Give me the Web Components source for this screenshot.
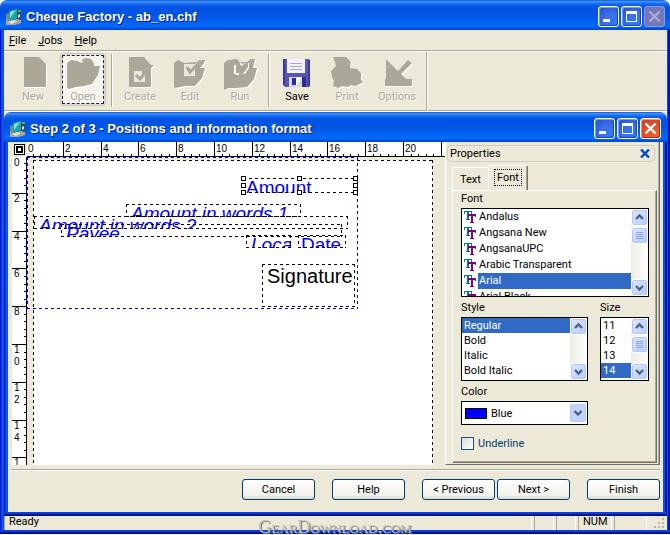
<!DOCTYPE html>
<html lang="en">
<head>
<meta charset="utf-8">
<title>Cheque Factory - ab_en.chf</title>
<style>
  :root {
    --face: #ece9d8;
    --shade: #aca899;
    --dark: #716f64;
    --select: #316ac5;
    --ink: #003c74;
  }
  html, body { height: 100%; }
  body {
    margin: 0;
    background: #f4f4f0;
    font: 11px Roboto, "Liberation Sans", Arial, sans-serif;
    color: #000;
    overflow: hidden;
  }
  .app { height: calc(100vh - 1px); }
  .desk { flex: 1; min-height: 0; }
  .work { flex: 1; min-height: 0; display: flex; padding: 0 3px 0 4px; }
  cheque-editor { flex: 1; min-width: 0; }
  .row { display: flex; gap: 12px; }
  .row > :first-child { flex: 1; }
  .short { margin-right: 61px; }
  .narrow { width: 49px; }
  .tick { margin-top: 8px; }
</style>
</head>
<body>

<xp-window class="app" caption="Cheque Factory - ab_en.chf" locked>
  <menu-bar items="File|Jobs|Help"></menu-bar>
  <tool-bar>
    <tool-button icon="new" disabled>New</tool-button>
    <tool-button icon="open" disabled active>Open</tool-button>
    <tool-separator></tool-separator>
    <tool-button icon="create" disabled>Create</tool-button>
    <tool-button icon="edit" disabled>Edit</tool-button>
    <tool-button icon="run" disabled>Run</tool-button>
    <tool-separator></tool-separator>
    <tool-button icon="save">Save</tool-button>
    <tool-button icon="print" disabled>Print</tool-button>
    <tool-button icon="options" disabled>Options</tool-button>
  </tool-bar>

  <xp-window class="desk" caption="Step 2 of 3 - Positions and information format" child>
    <div class="work">
      <cheque-editor>
        <cheque-field box="99 47 175 13" italic>Amount in words 1</cheque-field>
        <cheque-field box="7 59 314 13" italic>Amount in words 2</cheque-field>
        <cheque-field box="34 67 281 13" italic>Payee</cheque-field>
        <cheque-field box="219 78 45 13" italic>Local</cheque-field>
        <cheque-field box="271 78 48 13">Date</cheque-field>
        <cheque-field box="235 107 93 43" large>Signature</cheque-field>
        <cheque-field box="216 21 113 15" selected>Amount</cheque-field>
      </cheque-editor>
      <property-panel caption="Properties">
        <list-box label="Font" items="Andalus|Angsana New|AngsanaUPC|Arabic Transparent|Arial|Arial Black" value="Arial" thumb icons></list-box>
        <div class="row">
          <list-box label="Style" items="Regular|Bold|Italic|Bold Italic" value="Regular"></list-box>
          <list-box class="narrow" label="Size" items="11|12|13|14" value="14" thumb></list-box>
        </div>
        <color-box class="short" label="Color" value="Blue" color="#0000ff"></color-box>
        <check-box class="tick">Underline</check-box>
      </property-panel>
    </div>
    <wizard-footer>
      <push-button>Cancel</push-button>
      <push-button>Help</push-button>
      <push-button>&lt; Previous</push-button>
      <push-button joined>Next &gt;</push-button>
      <push-button>Finish</push-button>
    </wizard-footer>
  </xp-window>

  <status-bar>Ready</status-bar>
</xp-window>
<water-mark>GearDownload.com</water-mark>

<script>
// Dashed 1px outline, three on and three off
const dashed = (color) => `
  background:
    repeating-linear-gradient(90deg, ${color} 0 3px, transparent 3px 6px) top / 100% 1px no-repeat,
    repeating-linear-gradient(90deg, ${color} 0 3px, transparent 3px 6px) bottom / 100% 1px no-repeat,
    repeating-linear-gradient(${color} 0 3px, transparent 3px 6px) left / 1px 100% no-repeat,
    repeating-linear-gradient(${color} 0 3px, transparent 3px 6px) right / 1px 100% no-repeat;`;

class BaseElement extends HTMLElement {
  constructor() {
    super();
    this.attachShadow({ mode: 'open' });
  }

  connectedCallback() {
    this.shadowRoot.innerHTML = this.template();
  }

  attr(name) {
    return this.getAttribute(name) || '';
  }
}

// Window with title bar and blue frame
class XpWindow extends BaseElement {
  template() {
    const child = this.hasAttribute('child');
    const locked = this.hasAttribute('locked') ? 'disabled' : '';
    return `
      <style>
        :host {
          display: flex;
          flex-direction: column;
          box-sizing: border-box;
          min-width: 0;
          overflow: hidden;
          border-radius: 7px 7px 0 0;
        }
        header {
          flex: none;
          display: flex;
          align-items: center;
          gap: 2px;
          box-sizing: border-box;
          height: 30px;
          padding: 3px ${child ? '6px' : '5px'} 0 6px;
          background: linear-gradient(#0a4fd6 0, #3f93fb 5%, #2478f5 10%, #0a5be8 18%, #0053e1 30%, #0056e6 55%, #0466f8 78%, #0367fb 88%, #0055e0 95%, #003ecb 100%);
        }
        h1 {
          flex: 1;
          margin: 0;
          padding-left: 2px;
          font: bold 13px/20px "Liberation Sans", Arial, sans-serif;
          color: #fff;
          text-shadow: 1px 1px #0a1883;
          white-space: nowrap;
        }
        .ctl {
          flex: none;
          width: 21px;
          height: 21px;
          padding: 0;
          border: 1px solid #fff;
          border-radius: 3px;
          background: radial-gradient(circle at 80% 85%, #2f7bf5, #3a6fe8 45%, #1f4fd0 100%);
          box-shadow: inset 1px 1px #6f9bf3, inset -1px -1px #1941b5;
        }
        .ctl svg { display: block; }
        .close { background: radial-gradient(circle at 80% 80%, #e8632f, #e2502a 50%, #c8381c); box-shadow: inset 1px 1px #f0947a, inset -1px -1px #a52a10; }
        .close:disabled { background: #7376b8; border-color: #8f9bd8; box-shadow: none; }
        .frame {
          flex: 1;
          min-height: 0;
          display: flex;
          flex-direction: column;
          box-sizing: border-box;
          padding: 0 ${child ? '4px' : '3px'} 4px 4px;
          background:
            linear-gradient(#0a3fe0 0 50%, #00138c 50%) bottom / 100% 4px no-repeat,
            linear-gradient(90deg, #0019cf 0 1px, #0a3fe0 1px 2px, #1358ee 2px 3px, #0a4fe2 3px) left / 4px 100% no-repeat,
            linear-gradient(90deg, #0a4fe2 0 2px, #0019b0 2px) right / 4px 100% no-repeat;
        }
        .client {
          flex: 1;
          min-height: 0;
          display: flex;
          flex-direction: column;
          background: var(--face);
        }
      </style>
      <header>
        <svg width="16" height="16" viewBox="0 0 16 16">
          <path d="M0 5l4-1v10l-4 1z" fill="#7d8790"/>
          <path d="M3 2l8-2 1 9-9 3z" fill="#19a9a0"/>
          <path d="M4 3l6-2-6 8z" fill="#7fe6da"/>
          <path d="M11 3l4-2v11l-4 2z" fill="#37474f"/>
          <path d="M12 6l2-1v3l-2 1z" fill="#d8e0e0"/>
          <path d="M0 11l4 1 7-2 4 1v3l-6 2H0z" fill="#a9a49c"/>
          <path d="M2 13l5-2 4 1-5 3z" fill="#e6e2da"/>
          <path d="M12 1h3v2h-3z" fill="#54b34d"/>
        </svg>
        <h1>${this.attr('caption')}</h1>
        <button class="ctl" aria-label="Minimize"><svg width="19" height="19"><path d="M4 12h7v3H4z" fill="#fff"/></svg></button>
        <button class="ctl" aria-label="Maximize"><svg width="19" height="19"><path d="M4 4h11v11H4zM5 7v7h9V7z" fill="#fff" fill-rule="evenodd"/></svg></button>
        <button class="ctl close" aria-label="Close" ${locked}><svg width="19" height="19"><path d="M4.500 4.500l10 10M14.500 4.500l-10 10" stroke="${locked ? '#a9acd6' : '#fff'}" stroke-width="2.400"/></svg></button>
      </header>
      <div class="frame"><div class="client"><slot></slot></div></div>
    `;
  }
}

class MenuBar extends BaseElement {
  template() {
    const items = this.attr('items').split('|');
    return `
      <style>
        :host { display: block; border-bottom: 1px solid var(--shade); }
        nav { display: flex; gap: 12px; height: 20px; padding-left: 5px; }
        button { padding: 0; border: 0; background: none; font: inherit; line-height: 19px; color: inherit; }
      </style>
      <nav>${items.map((t) => `<button><u>${t[0]}</u>${t.slice(1)}</button>`).join('')}</nav>
    `;
  }
}

class ToolBar extends BaseElement {
  template() {
    return `
      <style>
        :host {
          display: flex;
          height: 59px;
          border-top: 1px solid #fff;
          border-bottom: 1px solid #fff;
          box-shadow: inset 0 -1px var(--shade);
        }
        .band { display: flex; padding: 1px 4px 3px; border-right: 1px solid var(--shade); box-shadow: 1px 0 #fff; }
      </style>
      <div class="band"><slot></slot></div>
    `;
  }
}

class ToolSeparator extends BaseElement {
  template() {
    return `
      <style>
        :host { display: block; box-sizing: border-box; width: 7px; padding: 1px 2px 0; }
        i { display: block; width: 1px; height: 53px; margin-left: 1px; background: var(--shade); box-shadow: 1px 0 #fff; }
      </style>
      <i></i>
    `;
  }
}

const toolIcons = {
  new: '<path d="M8 1h15l7 7v23H8z"/>',
  open: '<path d="M1 7l4-3 6 1 5 2 1-2-2-1 5-2 5 1 3 4v3h6l-2 9-6 9-8 2-8 1-7 2-2-1z"/>',
  create: '<path d="M6 1h15l7 8h3l-3 3v19H6z"/><path d="M11 15h8v3h3v8H11z" fill="var(--face)"/><path d="M13 19l4 4 7-9" fill="none" stroke="var(--shade)" stroke-width="3"/>',
  edit: '<path d="M1 7l4-3 6 3 12-1 4-2h5l-1 3-4 5h5l-3 10-7 8H12L2 32 1 30z"/><path d="M11 8h11l5-4 2 1-7 8v7H11z" fill="var(--face)"/><path d="M14 11l3 5 11-11" fill="none" stroke="var(--shade)" stroke-width="3"/>',
  run: '<path d="M1 7l4-3 9-1 3 3 7 0 4-3h4l-2 9h4l-3 11-7 8-11 1-7 0-5 2z"/><path d="M11 9h2v9h-2zM16 5l3 3 4-1-5 3zM20 18l5-7 0-4 1 0v5l-4 6zM13 17h3v2h-3z" fill="#fff"/>',
  save: `
    <path d="M3 3h26l1 1v26l-1 1H5l-2-2z" fill="#5a55b5"/>
    <path d="M3 3h2v26l-2-1zM28 4h2v26h-2z" fill="#3d3a94"/>
    <path d="M7 3h18v14H7z" fill="#f1f1f8"/>
    <path d="M10 7h12v1H10zM10 10h12v1H10zM10 13h12v1H10z" fill="#aaaabc"/>
    <path d="M9 21h17v10H9z" fill="#d6d6e2"/>
    <path d="M12 22h4v7h-4z" fill="#2b2aa0"/>
    <path d="M16 31l6-10h-5l-1 3z" fill="#fff"/>
    <path d="M22 21h4v10h-4z" fill="#2f2d92"/>`,
  print: '<path d="M3 1h13l5 5-1 6 7 1 4 4v7l2 2-1 1-7 3-4-1-3 2-5-1-5 2-5-2 1-5-2-4-1-6 5-5-1-4z"/>',
  options: '<path d="M6 3l12 12L28 4l4 3-11 11 5 5h6v7H5v-7h1z"/>'
};

class ToolButton extends BaseElement {
  template() {
    const off = this.hasAttribute('disabled');
    return `
      <style>
        :host { display: block; width: 50px; padding: 0 2px; box-sizing: border-box; }
        button {
          display: flex;
          flex-direction: column;
          align-items: center;
          box-sizing: border-box;
          width: 100%;
          height: 53px;
          padding: 2px 0 0;
          border: 1px solid transparent;
          border-radius: 3px;
          background: none;
          font: inherit;
          line-height: 14px;
          color: #000;
        }
        button:disabled { color: var(--shade); text-shadow: 1px 1px #fff; }
        button:disabled svg { fill: var(--shade); filter: drop-shadow(1px 1px 0 #fff); }
        svg { display: block; flex: none; }
        :host([active]) button {
          border-color: #cbc8b8;
          background: #f5f4ec;
          outline: 1px dashed #1b1b4a;
          outline-offset: -3px;
          box-shadow: inset 0 0 0 1px #dedbcd;
        }
      </style>
      <button ${off ? 'disabled' : ''}>
        <svg width="34" height="34" viewBox="0 0 34 34">${toolIcons[this.attr('icon')]}</svg>
        <slot></slot>
      </button>
    `;
  }
}

// Ruler: a numbered mark every 2 cm, a small tick every 0.4 cm
class RulerScale extends BaseElement {
  connectedCallback() {
    super.connectedCallback();
    this.observer = new ResizeObserver(() => this.draw());
    this.observer.observe(this);
  }

  disconnectedCallback() {
    this.observer.disconnect();
  }

  draw() {
    const vertical = this.hasAttribute('vertical');
    const length = vertical ? this.clientHeight : this.clientWidth;
    let marks = '';
    for (let n = 0, p = -2; p < length; n++, p = Math.round(n * 7.56 - 2)) {
      const major = n % 5 === 0;
      const from = major ? 0 : 12;
      if (n) {
        marks += vertical
          ? `<path d="M${from} ${p}h${15 - from}v1H${from}z"/>`
          : `<path d="M${p} ${from}v15h1V${from}z"/>`;
      }
      if (!major) continue;
      const label = String(n / 5 * 2);
      if (vertical) {
        [...label].forEach((digit, i) => {
          const y = Math.max(p, 0) + 9 + i * 12;
          if (y < length + 6) marks += `<text x="2" y="${y}">${digit}</text>`;
        });
      } else if (p + 8 < length) {
        marks += `<text x="${Math.max(p, -1) + 2}" y="10">${label}</text>`;
      }
    }
    this.shadowRoot.querySelector('svg').innerHTML = marks;
  }

  template() {
    return `
      <style>
        :host { display: block; overflow: hidden; position: relative; min-width: 0; min-height: 0; background: #fff; box-shadow: inset 0 -1px #000; }
        :host([vertical]) { box-shadow: inset -1px 0 #000; }
        svg { position: absolute; inset: 0; }
        text { font: 10px "Liberation Sans", Arial, sans-serif; }
      </style>
      <svg width="100%" height="100%" shape-rendering="crispEdges"></svg>
    `;
  }
}

class ChequeEditor extends BaseElement {
  template() {
    return `
      <style>
        :host {
          display: grid;
          grid-template: 15px minmax(0, 1fr) / 15px minmax(0, 1fr);
        }
        .corner { display: block; background: var(--face); }
        .stage { position: relative; overflow: hidden; margin-right: 1px; }
        .paper { position: absolute; left: 6px; top: 3px; bottom: -3px; width: 400px; background-color: #fff; }
        .paper::after, .area { content: ""; position: absolute; inset: 0; ${dashed('#000')} }
        .area { inset: auto; left: 0; top: 0; width: 331px; height: 152px; ${dashed('#0000d8')} }
      </style>
      <svg class="corner" width="15" height="15" shape-rendering="crispEdges">
        <path d="M2 2h10v10H2z" fill="#fff" stroke="#000"/><path d="M4 4h7v7H4zM6 6v3h3V6z" fill-rule="evenodd"/>
      </svg>
      <ruler-scale></ruler-scale>
      <ruler-scale vertical></ruler-scale>
      <div class="stage">
        <div class="paper"></div>
        <div class="area"></div>
        <slot></slot>
      </div>
    `;
  }
}

// One printable field, placed on the cheque by its box attribute: x y width height
class ChequeField extends BaseElement {
  template() {
    const [x, y, w, h] = this.attr('box').split(' ').map(Number);
    let handles = '';
    if (this.hasAttribute('selected')) {
      for (const hx of [0, (w - 1) / 2, w - 1]) {
        for (const hy of [0, (h - 1) / 2, h - 1]) {
          if (hx === (w - 1) / 2 && hy === (h - 1) / 2) continue;
          handles += `<rect x="${hx + 0.5}" y="${hy + 0.5}" width="4" height="4"/>`;
        }
      }
    }
    return `
      <style>
        :host {
          position: absolute;
          left: ${x}px;
          top: ${y}px;
          width: ${w}px;
          height: ${h}px;
          color: #0000ff;
          font: 19px/20px "Liberation Sans", Arial, sans-serif;
        }
        :host([italic]) { font-style: italic; }
        :host([large]) { color: #000; font-size: 20px; line-height: 24px; }
        .text { box-sizing: border-box; width: 100%; height: 100%; padding-left: 3px; overflow: hidden; white-space: nowrap; }
        :host([italic]) .text, :host([large]) .text { padding-left: 5px; }
        .edge { position: absolute; inset: 0; ${dashed('#000')} }
        svg { position: absolute; left: -2px; top: -2px; overflow: visible; fill: #fff; stroke: #000; }
      </style>
      <div class="text"><slot></slot></div>
      <div class="edge"></div>
      ${handles ? `<svg width="${w + 4}" height="${h + 4}">${handles}</svg>` : ''}
    `;
  }
}

class PropertyPanel extends BaseElement {
  template() {
    return `
      <style>
        :host {
          display: flex;
          flex-direction: column;
          box-sizing: border-box;
          width: 215px;
          padding: 3px 2px 0 1px;
          border-left: 1px solid #fff;
          border-right: 1px solid var(--dark);
          border-bottom: 1px solid var(--dark);
          box-shadow: inset -1px 0 var(--shade);
        }
        header {
          display: flex;
          justify-content: space-between;
          align-items: center;
          box-sizing: border-box;
          height: 17px;
          margin-right: 2px;
          padding: 0 4px 0 2px;
          border: 1px solid #d0cdbc;
          border-radius: 4px;
        }
        header button { width: 10px; height: 9px; padding: 0; border: 0; background: none; }
        svg { display: block; }
        .tabs { display: flex; align-items: flex-end; margin: 3px 0 0 5px; }
        .tabs button {
          height: 23px;
          padding: 0 7px;
          border: 0 solid #fff;
          border-width: 1px 0 0 1px;
          border-radius: 2px 2px 0 0;
          background: var(--face);
          font: inherit;
          color: inherit;
        }
        .tabs .on { height: 26px; margin-bottom: -1px; padding: 0 5px; border-right: 1px solid var(--dark); box-shadow: inset -1px 0 var(--shade); }
        .on span { display: block; padding: 2px 3px; margin-bottom: 2px; outline: 1px dotted #000; outline-offset: -1px; }
        .page {
          flex: 1;
          display: flex;
          flex-direction: column;
          gap: 4px;
          margin: 0 0 1px 5px;
          padding: 1px 7px 0 8px;
          border: 1px solid #fff;
          border-right-color: var(--dark);
          border-bottom-color: var(--dark);
          box-shadow: inset -1px -1px var(--shade);
        }
      </style>
      <header>
        <span>${this.attr('caption')}</span>
        <button aria-label="Close"><svg width="10" height="9"><path d="M1 .5l8 8M9 .5l-8 8" stroke="#0046d5" stroke-width="2.400"/></svg></button>
      </header>
      <div class="tabs" role="tablist">
        <button role="tab">Text</button><button class="on" role="tab" aria-selected="true"><span>Font</span></button>
      </div>
      <div class="page"><slot></slot></div>
    `;
  }
}

class ScrollBar extends BaseElement {
  template() {
    const arrow = (d) => `<svg width="15" height="15"><path d="${d}" fill="none" stroke="#4d6185" stroke-width="2.400"/></svg>`;
    return `
      <style>
        :host { display: flex; flex-direction: column; width: 17px; background: linear-gradient(90deg, #eeede5, #fefefb); }
        button {
          flex: none;
          box-sizing: border-box;
          width: 17px;
          height: 17px;
          padding: 0;
          border: 1px solid #fff;
          border-radius: 3px;
          background: linear-gradient(135deg, #dbe6fe, #b9cbfa);
          box-shadow: inset 0 0 0 1px #b4c8f6;
        }
        svg { display: block; }
        .thumb { margin-top: 1px; }
        .down { margin-top: auto; }
      </style>
      <button aria-label="Up">${arrow('M4 9l3.500-3.500L11 9')}</button>
      ${this.hasAttribute('thumb') ? '<button class="thumb" aria-label="Position"><svg width="15" height="15"><path d="M4 4.500h7M4 6.500h7M4 8.500h7M4 10.500h7" stroke="#8ba6e6"/></svg></button>' : ''}
      <button class="down" aria-label="Down">${arrow('M4 6l3.500 3.500L11 6')}</button>
    `;
  }
}

const fontIcon = 'data:image/svg+xml,' + encodeURIComponent(
  '<svg xmlns="http://www.w3.org/2000/svg" width="13" height="14" shape-rendering="crispEdges">' +
  '<path d="M0 1h8v3H7V2H5v7h1v1H2V9h1V2H1v2H0z" fill="#008080"/>' +
  '<path d="M4 4h8v3h-1V6H9v6h1v1H6v-1h1V6H5v1H4z" fill="#800080"/></svg>');

class ListBox extends BaseElement {
  template() {
    const value = this.attr('value');
    const options = this.attr('items').split('|')
      .map((t) => `<option ${t === value ? 'selected' : ''}>${t}</option>`).join('');
    return `
      <style>
        :host { display: block; }
        label { display: block; height: 14px; margin-bottom: 2px; line-height: 14px; }
        .box { display: flex; box-sizing: border-box; height: 64px; border: 1px solid #000; background: #fff; }
        select {
          flex: 1;
          min-width: 0;
          height: 100%;
          padding: 0;
          border: 0;
          border-radius: 0;
          outline: 0;
          background: #fff;
          font: inherit;
          color: #000;
          overflow: hidden;
          scrollbar-width: none;
        }
        option { box-sizing: border-box; height: 15px; min-height: 15px; padding: 1px 2px 0; line-height: 14px; }
        option:checked { background: linear-gradient(#316ac5, #316ac5); color: #fff; }
        :host([icons]) .box { height: 89px; }
        :host([icons]) option { height: 16px; min-height: 16px; padding-left: 17px; line-height: 15px; background: url("${fontIcon}") 2px 1px no-repeat; }
        :host([icons]) option:checked { background: url("${fontIcon}") 2px 1px no-repeat, linear-gradient(#316ac5, #316ac5) 16px 0 no-repeat #fff; }
      </style>
      <label for="list">${this.attr('label')}</label>
      <div class="box">
        <select id="list" size="4">${options}</select>
        <scroll-bar ${this.hasAttribute('thumb') ? 'thumb' : ''}></scroll-bar>
      </div>
    `;
  }
}

class ColorBox extends BaseElement {
  template() {
    return `
      <style>
        :host { display: block; }
        label { display: block; height: 14px; margin-bottom: 2px; line-height: 14px; }
        .box { display: flex; align-items: center; box-sizing: border-box; height: 24px; padding: 0 1px 0 3px; border: 1px solid #000; background: #fff; }
        .swatch { width: 20px; height: 9px; border: 1px solid #000; background: ${this.attr('color')}; }
        select {
          appearance: none;
          flex: 1;
          height: 20px;
          padding: 0 0 0 4px;
          border: 0;
          background:
            url('data:image/svg+xml,<svg xmlns="http://www.w3.org/2000/svg" width="16" height="18"><rect x=".5" y=".5" width="15" height="17" rx="1.500" fill="%23c3d3fd" stroke="%23b4c8f6"/><path d="M4.500 7l3.500 3.500L11.500 7" fill="none" stroke="%234d6185" stroke-width="2.400"/></svg>') right center no-repeat;
          font: inherit;
          color: #000;
        }
      </style>
      <label for="color">${this.attr('label')}</label>
      <div class="box">
        <span class="swatch"></span>
        <select id="color"><option>${this.attr('value')}</option></select>
      </div>
    `;
  }
}

class CheckBox extends BaseElement {
  template() {
    return `
      <style>
        :host { display: block; }
        label { display: flex; align-items: center; gap: 4px; color: var(--ink); }
        input { appearance: none; width: 13px; height: 13px; margin: 0; border: 1px solid #1c5180; background: linear-gradient(135deg, #dcdcd7, #fff); }
      </style>
      <label><input type="checkbox"><slot></slot></label>
    `;
  }
}

class WizardFooter extends BaseElement {
  template() {
    return `
      <style>
        :host {
          display: flex;
          justify-content: flex-end;
          margin: 4px 3px 0;
          padding: 9px 0 12px;
          border-top: 1px solid var(--shade);
          box-shadow: inset 0 1px #fff;
        }
      </style>
      <slot></slot>
    `;
  }
}

class PushButton extends BaseElement {
  template() {
    return `
      <style>
        :host { display: block; margin-left: 17px; }
        :host([joined]) { margin-left: 2px; }
        button {
          display: block;
          box-sizing: border-box;
          width: 73px;
          height: 21px;
          padding: 0;
          border: 1px solid var(--ink);
          border-radius: 3px;
          background: linear-gradient(#fff, #f3f2ec 80%, #dcd8ca);
          font: inherit;
          color: #000;
        }
      </style>
      <button><slot></slot></button>
    `;
  }
}

class StatusBar extends BaseElement {
  template() {
    return `
      <style>
        :host { display: flex; height: 14px; line-height: 12px; }
        span { box-sizing: border-box; border-left: 1px solid var(--shade); border-right: 1px solid #fff; margin-right: 2px; }
        .msg { flex: 1; padding-left: 4px; }
        .small { width: 20px; }
        .num { width: 34px; padding-left: 4px; }
        .last { width: 33px; }
        svg { width: 14px; height: 14px; margin-left: 4px; }
      </style>
      <span class="msg"><slot></slot></span>
      <span class="small"></span>
      <span class="small"></span>
      <span class="num">NUM</span>
      <span class="last"></span>
      <svg><path d="M9 2h2v2H9zM5 6h2v2H5zM9 6h2v2H9zM1 10h2v2H1zM5 10h2v2H5zM9 10h2v2H9z" fill="#b8b4a2"/></svg>
    `;
  }
}

class WaterMark extends BaseElement {
  template() {
    return `
      <style>
        :host {
          position: absolute;
          left: 0;
          right: 0;
          bottom: 0;
          text-align: center;
          font: small-caps 18px/16px "Liberation Serif", "Times New Roman", serif;
          color: #c4c2bb;
          text-shadow: 1px 1px #77776f;
          pointer-events: none;
        }
      </style>
      <slot></slot>
    `;
  }
}

customElements.define('xp-window', XpWindow);
customElements.define('menu-bar', MenuBar);
customElements.define('tool-bar', ToolBar);
customElements.define('tool-separator', ToolSeparator);
customElements.define('tool-button', ToolButton);
customElements.define('ruler-scale', RulerScale);
customElements.define('cheque-editor', ChequeEditor);
customElements.define('cheque-field', ChequeField);
customElements.define('property-panel', PropertyPanel);
customElements.define('scroll-bar', ScrollBar);
customElements.define('list-box', ListBox);
customElements.define('color-box', ColorBox);
customElements.define('check-box', CheckBox);
customElements.define('wizard-footer', WizardFooter);
customElements.define('push-button', PushButton);
customElements.define('status-bar', StatusBar);
customElements.define('water-mark', WaterMark);
</script>
</body>
</html>
